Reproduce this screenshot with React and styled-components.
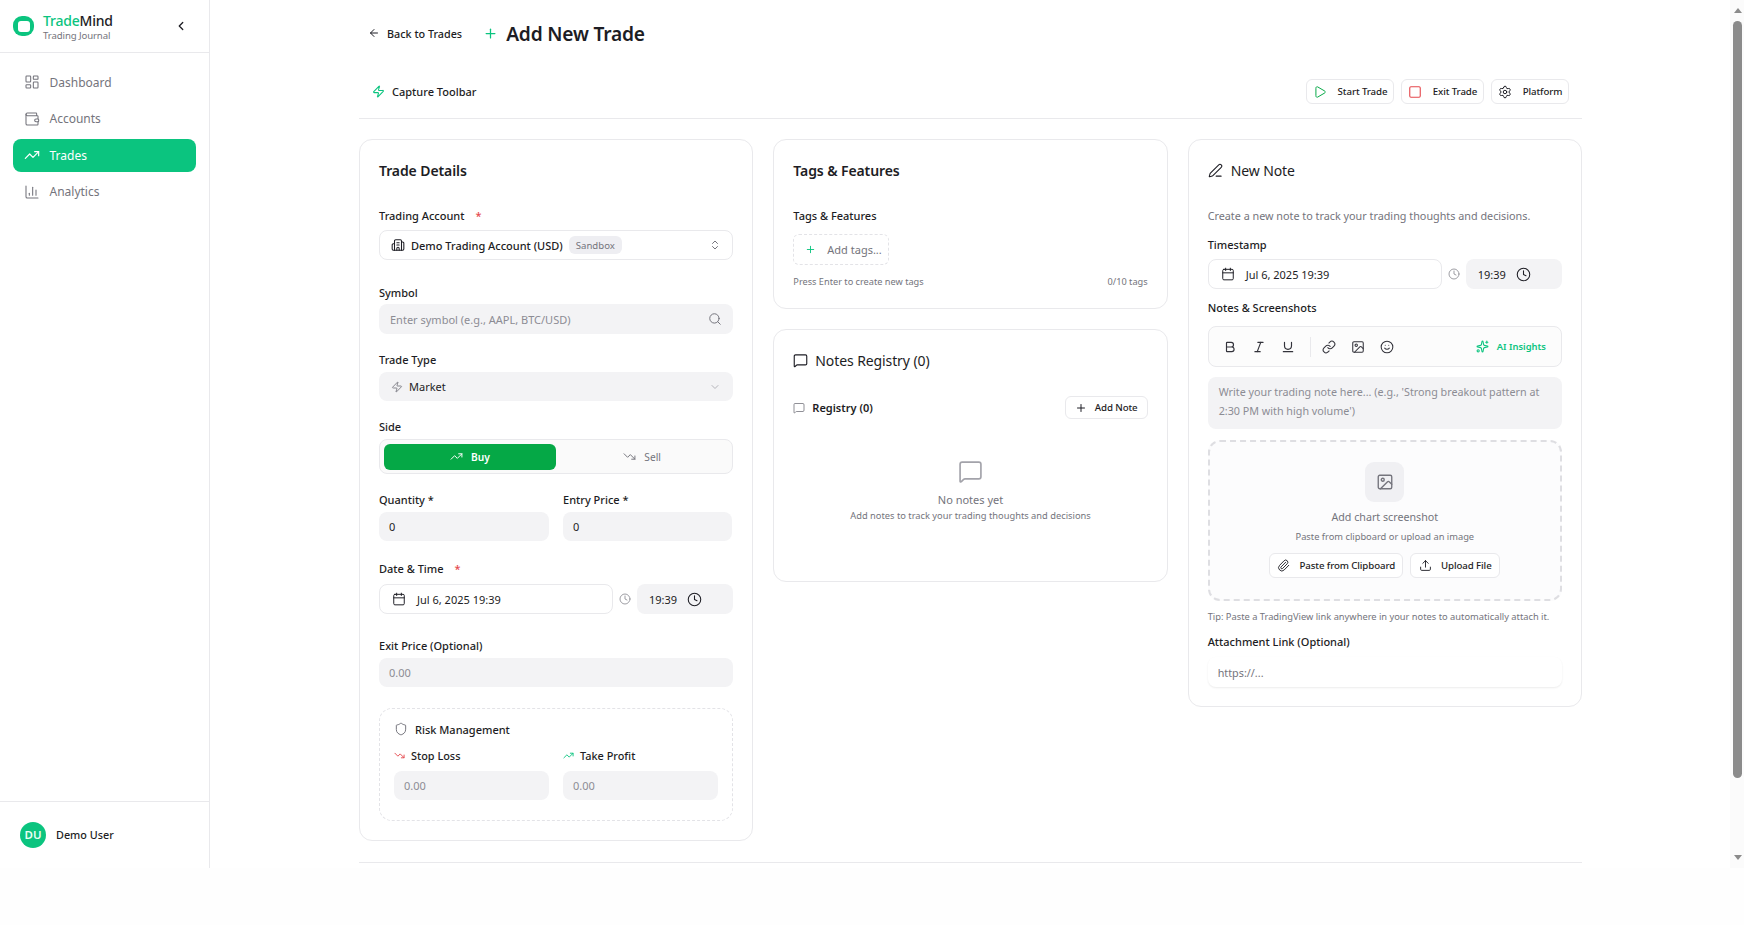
import React from "react";
import styled, { createGlobalStyle } from "styled-components";
import {
  LayoutDashboard, Wallet, TrendingUp, TrendingDown, ChartColumn, ChevronLeft, ArrowLeft, Plus, Zap, Play, Square,
  Settings, Building2, ChevronsUpDown, Search, ChevronDown, Calendar, Clock, Shield, MessageSquare, PenLine, Bold,
  Italic, Underline, Link, Smile, Sparkles, Image as ImageIcon, Paperclip, Upload,
} from "lucide-react";

const color = {
  green: "#0bc47f",
  buy: "#05a846",
  ink: "#1d1d24",
  muted: "#74747c",
  faint: "#8c8c94",
  line: "#e9e9ec",
  fill: "#f3f3f5",
};

const GlobalStyle = createGlobalStyle`
  html, body {
    margin: 0;
    height: 100%;
    overflow: hidden;
    background: #fefefe;
    font-family: "Noto Sans", "Open Sans", sans-serif;
    font-size: 11px;
    color: ${color.ink};
  }
  * { box-sizing: border-box; }
`;

const Shell = styled.div`
  display: flex;
  height: 868px;
  background: #fff;
`;

const Sidebar = styled.aside`
  flex: 0 0 210px;
  display: flex;
  flex-direction: column;
  border-right: 1px solid ${color.line};
`;

const Brand = styled.div`
  height: 53px;
  display: flex;
  align-items: center;
  padding: 0 21px 0 13px;
  border-bottom: 1px solid ${color.line};
`;

const LogoMark = styled.div`
  width: 21px;
  height: 20px;
  border-radius: 9px;
  background: ${color.green};
  display: flex;
  align-items: center;
  justify-content: center;
  margin-right: 9px;
  &::after {
    content: "";
    width: 12px;
    height: 11px;
    border-radius: 3px;
    background: #fff;
  }
`;

const BrandText = styled.div`
  flex: 1;
  display: flex;
  flex-direction: column;
  padding-top: 2px;
`;

const BrandName = styled.div`
  font-size: 14px;
  line-height: 17px;
  font-weight: 500;
  letter-spacing: -0.2px;
  span { color: ${color.green}; }
`;

const BrandSub = styled.div`
  font-size: 9.6px;
  line-height: 13px;
  color: ${color.muted};
  letter-spacing: -0.1px;
`;

const Nav = styled.nav`
  flex: 1;
  display: flex;
  flex-direction: column;
  gap: 3.6px;
  padding: 12.5px 13px;
`;

const NavItem = styled.a`
  height: 33px;
  display: flex;
  align-items: center;
  gap: 10px;
  padding: 0 10.5px;
  border-radius: 8px;
  font-size: 12px;
  background: ${(p) => (p.$active ? color.green : "transparent")};
  color: ${(p) => (p.$active ? "#fff" : color.muted)};
`;

const UserRow = styled.div`
  height: 67px;
  display: flex;
  align-items: center;
  gap: 10px;
  padding: 0 20px 1px;
  border-top: 1px solid ${color.line};
  font-weight: 500;
  font-size: 10.8px;
`;

const Avatar = styled.div`
  width: 26px;
  height: 26px;
  border-radius: 50%;
  background: ${color.green};
  color: #e9fff5;
  display: flex;
  align-items: center;
  justify-content: center;
  font-size: 11.5px;
  font-weight: 600;
`;

const Main = styled.main`
  flex: 1;
  padding: 20px 148px 0 149px;
`;

const PageHead = styled.div`
  height: 26px;
  display: flex;
  align-items: center;
`;

const BackLink = styled.a`
  display: flex;
  align-items: center;
  gap: 7px;
  margin-left: 9px;
  font-size: 10.8px;
  font-weight: 500;
`;

const PageTitle = styled.h1`
  margin: 0 0 0 21px;
  display: flex;
  align-items: center;
  gap: 8px;
  font-size: 19.2px;
  font-weight: 600;
  letter-spacing: -0.2px;
  svg { color: ${color.green}; }
`;

const CaptureBar = styled.div`
  height: 53px;
  margin-top: 20px;
  padding: 0 13px 1px 13px;
  display: flex;
  align-items: center;
  justify-content: space-between;
  border-bottom: 1px solid ${color.line};
`;

const CaptureTitle = styled.div`
  display: flex;
  align-items: center;
  gap: 7px;
  font-size: 11px;
  font-weight: 500;
  svg { color: ${color.green}; }
`;

const ButtonRow = styled.div`
  display: flex;
  gap: 7px;
`;

const Button = styled.button`
  height: ${(p) => p.$h || 25}px;
  width: ${(p) => p.$w}px;
  display: flex;
  align-items: center;
  justify-content: center;
  gap: ${(p) => p.$gap || 11}px;
  padding: 0;
  background: #fff;
  border: 1px solid ${color.line};
  border-radius: 6px;
  font-family: inherit;
  font-size: 9.7px;
  font-weight: 500;
  letter-spacing: -0.1px;
  color: ${color.ink};
`;

const Columns = styled.div`
  display: grid;
  grid-template-columns: repeat(3, 1fr);
  gap: 20px;
  align-items: start;
  margin-top: 20px;
`;

const Stack = styled.div`
  display: flex;
  flex-direction: column;
  gap: 20px;
`;

const Card = styled.section`
  padding: 20px 19px 19px;
  background: #fff;
  border: 1px solid ${color.line};
  border-radius: 13px;
`;

const CardTitle = styled.h2`
  margin: 0;
  height: 22px;
  display: flex;
  align-items: center;
  gap: ${(p) => p.$gap || 8}px;
  padding-bottom: 1px;
  font-size: 14px;
  letter-spacing: -0.1px;
  font-weight: ${(p) => p.$weight || 600};
`;

const Field = styled.div`
  margin-top: ${(p) => p.$mt}px;
`;

const Label = styled.div`
  height: 18px;
  display: flex;
  align-items: center;
  padding-bottom: 1.5px;
  margin-bottom: ${(p) => p.$gap || 3}px;
  font-size: 11px;
  font-weight: 500;
  i {
    color: #e5484d;
    font-style: normal;
    margin-left: 11px;
  }
`;

const Control = styled.div`
  height: ${(p) => p.$h || 29}px;
  display: flex;
  align-items: center;
  gap: ${(p) => p.$gap || 6}px;
  padding: 0 ${(p) => p.$pad || 10}px;
  border-radius: 8px;
  background: ${(p) => (p.$plain ? "#fff" : color.fill)};
  border: ${(p) => (p.$plain ? `1px solid ${color.line}` : "none")};
  flex: ${(p) => p.$flex || "none"};
  font-size: 11px;
  color: ${(p) => (p.$dim ? color.faint : color.ink)};
`;

const AccountName = styled.span`
  font-weight: 500;
`;

const Spacer = styled.div`
  flex: 1;
`;

const Badge = styled.span`
  padding: 0 7px;
  height: 18px;
  display: flex;
  align-items: center;
  border-radius: 6px;
  background: #eeeef2;
  color: ${color.muted};
  font-size: 9.6px;
`;

const TwoUp = styled.div`
  display: grid;
  grid-template-columns: 170px 169px;
  gap: 14px;
`;

const Toggle = styled.div`
  height: 35px;
  padding: 3.5px 4px;
  display: grid;
  grid-template-columns: 172px 1fr;
  background: #fafafa;
  border: 1px solid ${color.line};
  border-radius: 8px;
`;

const ToggleOption = styled.div`
  display: flex;
  align-items: center;
  justify-content: center;
  gap: 8px;
  border-radius: 6px;
  font-size: 10.2px;
  font-weight: ${(p) => (p.$on ? 600 : 400)};
  background: ${(p) => (p.$on ? color.buy : "transparent")};
  color: ${(p) => (p.$on ? "#fff" : color.muted)};
`;

const DateRow = styled.div`
  display: flex;
  align-items: center;
  gap: 6px;
`;

const RiskBox = styled.div`
  margin-top: 21px;
  height: 113px;
  padding: 10px 14px;
  border: 1px dashed #e3e3e7;
  border-radius: 13px;
`;

const RiskHead = styled.div`
  height: 20px;
  display: flex;
  align-items: center;
  gap: 7px;
  font-size: 11px;
  font-weight: 500;
  margin-bottom: 6px;
`;

const RiskLabel = styled.div`
  height: 20px;
  display: flex;
  align-items: center;
  gap: 6px;
  font-size: 10.9px;
  font-weight: 500;
  margin-bottom: 6px;
`;

const RiskGrid = styled.div`
  display: grid;
  grid-template-columns: 155px 155px;
  gap: 14px;
`;

const TagInput = styled.div`
  width: 96px;
  height: 31px;
  display: flex;
  align-items: center;
  gap: 11px;
  padding-left: 11px;
  border: 1px dashed #e3e3e7;
  border-radius: 6px;
  color: ${color.muted};
  font-size: 11px;
  svg { color: ${color.green}; }
`;

const HintRow = styled.div`
  display: flex;
  justify-content: space-between;
  margin-top: 10px;
  font-size: 9.2px;
  line-height: 14px;
  color: ${color.muted};
`;

const RegistryRow = styled.div`
  display: flex;
  align-items: center;
  justify-content: space-between;
  margin-top: 24px;
`;

const RegistryLabel = styled.div`
  display: flex;
  align-items: center;
  gap: 7px;
  font-size: 11px;
  font-weight: 600;
  svg { color: ${color.muted}; }
`;

const EmptyState = styled.div`
  display: flex;
  flex-direction: column;
  align-items: center;
  margin-top: 40px;
  padding-bottom: 38px;
  color: ${color.muted};
  font-size: 9.3px;
  line-height: 16px;
  svg { color: #a3a3aa; margin-bottom: 8px; }
  strong { font-weight: 400; font-size: 11px; }
`;

const Muted = styled.p`
  margin: 26px 0 0;
  height: 16px;
  line-height: 16px;
  font-size: 10.8px;
  color: ${color.muted};
`;

const EditorBar = styled.div`
  height: 41px;
  display: flex;
  align-items: center;
  padding: 0 14px;
  background: #fcfcfc;
  border: 1px solid ${color.line};
  border-radius: 8px;
`;

const ToolIcons = styled.div`
  display: flex;
  align-items: center;
  gap: 15px;
  color: #33333b;
`;

const ToolDivider = styled.div`
  width: 1px;
  height: 20px;
  margin-right: -4px;
  background: ${color.line};
`;

const AiLink = styled.div`
  margin-left: auto;
  display: flex;
  align-items: center;
  gap: 8px;
  padding-right: 1px;
  color: ${color.green};
  font-size: 9.4px;
  font-weight: 600;
`;

const NoteArea = styled.div`
  height: 52px;
  margin-top: 10px;
  padding: 6px 11px;
  border-radius: 8px;
  background: ${color.fill};
  color: ${color.faint};
  font-size: 10.75px;
  line-height: 19px;
`;

const DropZone = styled.div`
  height: 161px;
  margin-top: 11px;
  padding-top: 20px;
  display: flex;
  flex-direction: column;
  align-items: center;
  background: #fcfcfd;
  border: 2px dashed #dedee2;
  border-radius: 12px;
  color: ${color.muted};
`;

const DropIcon = styled.div`
  width: 39px;
  height: 40px;
  display: flex;
  align-items: center;
  justify-content: center;
  margin-bottom: 7px;
  border-radius: 9px;
  background: #f0f0f3;
`;

const DropTitle = styled.div`
  font-size: 10.7px;
  line-height: 17px;
`;

const DropSub = styled.div`
  font-size: 9.3px;
  line-height: 15px;
  margin-top: 3px;
`;

const DropActions = styled.div`
  display: flex;
  gap: 7px;
  margin-top: 9px;
`;

const Tip = styled.p`
  margin: 9px 0 0;
  font-size: 9.3px;
  line-height: 14px;
  white-space: nowrap;
  color: ${color.muted};
`;

const LinkInput = styled.div`
  height: 30px;
  display: flex;
  align-items: center;
  padding: 0 10px;
  background: #fff;
  border-radius: 8px;
  box-shadow: 0 1px 2px rgba(0, 0, 0, 0.08);
  color: ${color.muted};
  font-size: 10.8px;
`;

const PageFoot = styled.div`
  margin-top: 21px;
  border-top: 1px solid ${color.line};
`;

const ScrollRail = styled.div`
  flex: 0 0 14px;
  display: flex;
  flex-direction: column;
  align-items: center;
  background: #fbfbfb;
  color: #8b8b8b;
  padding: 8px 0 0 1px;
`;

const ScrollThumb = styled.div`
  width: 9px;
  height: 757px;
  margin: 8px 0 77px;
  border-radius: 5px;
  background: #8b8b8b;
`;

const Arrow = styled.div`
  width: 0;
  height: 0;
  border-left: 4.5px solid transparent;
  border-right: 4.5px solid transparent;
  border-${(p) => (p.$down ? "top" : "bottom")}: 5px solid currentColor;
`;

function DateTimeRow() {
  return (
    <DateRow>
      <Control $plain $h={30} $pad={12} $gap={11} $flex="0 0 234px">
        <Calendar size={14} strokeWidth={1.7} />
        Jul 6, 2025 19:39
      </Control>
      <Clock size={12} color={color.faint} strokeWidth={1.7} />
      <Control $h={30} $pad={12} $gap={10} $flex="1">
        19:39
        <Clock size={15} strokeWidth={1.7} />
      </Control>
    </DateRow>
  );
}

export default function App() {
  return (
    <>
      <GlobalStyle />
      <Shell>
        <Sidebar>
          <Brand>
            <LogoMark />
            <BrandText>
              <BrandName><span>Trade</span>Mind</BrandName>
              <BrandSub>Trading Journal</BrandSub>
            </BrandText>
            <ChevronLeft size={14} strokeWidth={2.2} />
          </Brand>
          <Nav>
            <NavItem><LayoutDashboard size={16} strokeWidth={1.6} />Dashboard</NavItem>
            <NavItem><Wallet size={16} strokeWidth={1.6} />Accounts</NavItem>
            <NavItem $active><TrendingUp size={16} strokeWidth={1.8} />Trades</NavItem>
            <NavItem><ChartColumn size={16} strokeWidth={1.6} />Analytics</NavItem>
          </Nav>
          <UserRow>
            <Avatar>DU</Avatar>
            Demo User
          </UserRow>
        </Sidebar>

        <Main>
          <PageHead>
            <BackLink><ArrowLeft size={12} />Back to Trades</BackLink>
            <PageTitle><Plus size={15} />Add New Trade</PageTitle>
          </PageHead>

          <CaptureBar>
            <CaptureTitle><Zap size={13} />Capture Toolbar</CaptureTitle>
            <ButtonRow>
              <Button $w={88}><Play size={14} color={color.buy} strokeWidth={1.7} />Start Trade</Button>
              <Button $w={83}><Square size={14} color="#e5484d" strokeWidth={1.9} />Exit Trade</Button>
              <Button $w={78}><Settings size={14} strokeWidth={1.7} />Platform</Button>
            </ButtonRow>
          </CaptureBar>

          <Columns>
            <Card>
              <CardTitle>Trade Details</CardTitle>
              <Field $mt={25}>
                <Label $gap={5}>Trading Account<i>*</i></Label>
                <Control $plain $h={30} $pad={11}>
                  <Building2 size={14} strokeWidth={1.8} />
                  <AccountName>Demo Trading Account (USD)</AccountName>
                  <Badge>Sandbox</Badge>
                  <Spacer />
                  <ChevronsUpDown size={12} color={color.muted} />
                </Control>
              </Field>
              <Field $mt={24}>
                <Label $gap={2}>Symbol</Label>
                <Control $h={30} $dim $pad={11}>
                  Enter symbol (e.g., AAPL, BTC/USD)
                  <Spacer />
                  <Search size={14} color={color.muted} strokeWidth={1.7} />
                </Control>
              </Field>
              <Field $mt={17}>
                <Label>Trade Type</Label>
                <Control $pad={12}>
                  <Zap size={12} color={color.muted} strokeWidth={1.7} />
                  Market
                  <Spacer />
                  <ChevronDown size={12} color="#b4b4ba" />
                </Control>
              </Field>
              <Field $mt={17}>
                <Label>Side</Label>
                <Toggle>
                  <ToggleOption $on><TrendingUp size={13} strokeWidth={1.8} />Buy</ToggleOption>
                  <ToggleOption><TrendingDown size={13} strokeWidth={1.8} />Sell</ToggleOption>
                </Toggle>
              </Field>
              <Field $mt={17}>
                <TwoUp>
                  <div>
                    <Label>Quantity *</Label>
                    <Control>0</Control>
                  </div>
                  <div>
                    <Label>Entry Price *</Label>
                    <Control>0</Control>
                  </div>
                </TwoUp>
              </Field>
              <Field $mt={19}>
                <Label $gap={6}>Date &amp; Time<i>*</i></Label>
                <DateTimeRow />
              </Field>
              <Field $mt={23}>
                <Label>Exit Price (Optional)</Label>
                <Control $dim>0.00</Control>
              </Field>
              <RiskBox>
                <RiskHead><Shield size={14} color={color.muted} strokeWidth={1.7} />Risk Management</RiskHead>
                <RiskGrid>
                  <div>
                    <RiskLabel><TrendingDown size={11} color="#e5484d" />Stop Loss</RiskLabel>
                    <Control $dim>0.00</Control>
                  </div>
                  <div>
                    <RiskLabel><TrendingUp size={11} color={color.green} />Take Profit</RiskLabel>
                    <Control $dim>0.00</Control>
                  </div>
                </RiskGrid>
              </RiskBox>
            </Card>

            <Stack>
              <Card>
                <CardTitle>Tags &amp; Features</CardTitle>
                <Field $mt={25}>
                  <Label $gap={9}>Tags &amp; Features</Label>
                  <TagInput><Plus size={11} />Add tags...</TagInput>
                </Field>
                <HintRow>
                  <span>Press Enter to create new tags</span>
                  <span>0/10 tags</span>
                </HintRow>
              </Card>
              <Card>
                <CardTitle $weight={400} $gap={7}>
                  <MessageSquare size={15} strokeWidth={1.8} />
                  Notes Registry (0)
                </CardTitle>
                <RegistryRow>
                  <RegistryLabel><MessageSquare size={12} strokeWidth={1.6} />Registry (0)</RegistryLabel>
                  <Button $w={83} $h={23} $gap={8}><Plus size={12} />Add Note</Button>
                </RegistryRow>
                <EmptyState>
                  <MessageSquare size={25} strokeWidth={1.6} />
                  <strong>No notes yet</strong>
                  Add notes to track your trading thoughts and decisions
                </EmptyState>
              </Card>
            </Stack>

            <Card>
              <CardTitle $weight={400} $gap={8}>
                <PenLine size={15} strokeWidth={1.7} />
                New Note
              </CardTitle>
              <Muted>Create a new note to track your trading thoughts and decisions.</Muted>
              <Field $mt={12}>
                <Label $gap={5}>Timestamp</Label>
                <DateTimeRow />
              </Field>
              <Field $mt={10}>
                <Label $gap={9}>Notes &amp; Screenshots</Label>
                <EditorBar>
                  <ToolIcons>
                    <Bold size={14} strokeWidth={2} />
                    <Italic size={14} strokeWidth={2} />
                    <Underline size={14} strokeWidth={2} />
                    <ToolDivider />
                    <Link size={14} strokeWidth={1.8} />
                    <ImageIcon size={14} strokeWidth={1.8} />
                    <Smile size={14} strokeWidth={1.8} />
                  </ToolIcons>
                  <AiLink><Sparkles size={13} />AI Insights</AiLink>
                </EditorBar>
              </Field>
              <NoteArea>Write your trading note here... (e.g., 'Strong breakout pattern at 2:30 PM with high volume')</NoteArea>
              <DropZone>
                <DropIcon><ImageIcon size={18} strokeWidth={1.8} /></DropIcon>
                <DropTitle>Add chart screenshot</DropTitle>
                <DropSub>Paste from clipboard or upload an image</DropSub>
                <DropActions>
                  <Button $w={134} $gap={9}><Paperclip size={13} strokeWidth={1.7} />Paste from Clipboard</Button>
                  <Button $w={90} $gap={9}><Upload size={13} strokeWidth={1.7} />Upload File</Button>
                </DropActions>
              </DropZone>
              <Tip>Tip: Paste a TradingView link anywhere in your notes to automatically attach it.</Tip>
              <Field $mt={9}>
                <Label $gap={6}>Attachment Link (Optional)</Label>
                <LinkInput>https://...</LinkInput>
              </Field>
            </Card>
          </Columns>
          <PageFoot />
        </Main>

        <ScrollRail>
          <Arrow />
          <ScrollThumb />
          <Arrow $down />
        </ScrollRail>
      </Shell>
    </>
  );
}
